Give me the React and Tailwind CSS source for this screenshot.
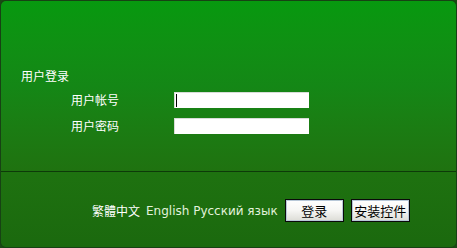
import React from 'react';

const cjk = { fontFamily: '"Noto Sans CJK SC", "DejaVu Sans", sans-serif' };

const Field = ({ label, focused }) => (
  <div className="flex items-center h-[16px] pl-[70px]">
    <div className="w-[103px] text-[12px] leading-[14px] text-white" style={cjk}>
      {label}
    </div>
    <div className="w-[135px] h-[16px] bg-white border-t border-l border-[#d8dcd8] flex items-center pl-[1px]">
      {focused && <div className="w-px h-[13px] bg-black" />}
    </div>
  </div>
);

const Button = ({ children }) => (
  <button
    className="w-[59px] h-[23px] border border-[#0a0a0a] bg-gradient-to-b from-white via-[#f6f6f4] to-[#dcdcd6] shadow-[inset_0_0_0_1px_#b8c8d8] text-[13px] leading-[14px] text-black flex items-center justify-center"
    style={cjk}
  >
    {children}
  </button>
);

export default function App() {
  return (
    <div className="w-[457px] h-[248px] bg-[#1a4a14]">
      <div className="w-[457px] h-[248px] rounded-[6px] border border-[#174214] overflow-hidden flex flex-col">
        <div className="h-[170px] bg-gradient-to-b from-[#07990f] via-[#148716] to-[#1f7210] pt-[68px] pl-[20px]">
          <div className="text-[12px] leading-[14px] text-white" style={cjk}>
            用户登录
          </div>
          <div className="-ml-[20px] mt-[9px] flex flex-col gap-[10px]">
            <Field label="用户帐号" focused />
            <Field label="用户密码" />
          </div>
        </div>
        <div className="h-px bg-[#0d3a09]" />
        <div className="flex-1 bg-gradient-to-b from-[#1e7210] to-[#1b690e] pt-[27px] pl-[91px]">
          <div className="flex items-center h-[23px]">
            <span className="text-[12px] leading-[14px] text-white" style={cjk}>
              繁體中文
            </span>
            <span
              className="ml-[6px] text-[12px] leading-[14px] text-[#e2f2dc]"
              style={{ fontFamily: '"DejaVu Sans", Verdana, sans-serif' }}
            >
              English Русский язык
            </span>
            <div className="ml-[7px] flex gap-[7px]">
              <Button>登录</Button>
              <Button>安装控件</Button>
            </div>
          </div>
        </div>
      </div>
    </div>
  );
}
